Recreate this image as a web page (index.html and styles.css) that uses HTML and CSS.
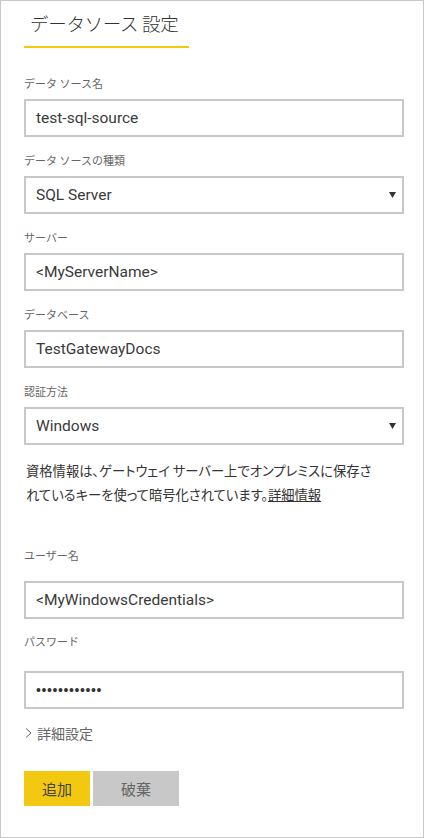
FILE: index.html
```html
<!DOCTYPE html>
<html lang="ja">
<head>
<meta charset="utf-8">
<link rel="stylesheet" href="styles.css">
</head>
<body>
<div class="panel">
  <div class="title">データソース 設定</div>

  <div class="field first">
    <div class="label">データ ソース名</div>
    <div class="input">test-sql-source</div>
  </div>

  <div class="field">
    <div class="label">データ ソースの種類</div>
    <div class="input select">
      <span>SQL Server</span>
      <svg class="caret" width="7" height="6" viewBox="0 0 7 6"><path d="M0 0H7L3.5 6Z" fill="#333"/></svg>
    </div>
  </div>

  <div class="field">
    <div class="label">サーバー</div>
    <div class="input">&lt;MyServerName&gt;</div>
  </div>

  <div class="field">
    <div class="label">データベース</div>
    <div class="input">TestGatewayDocs</div>
  </div>

  <div class="field">
    <div class="label">認証方法</div>
    <div class="input select">
      <span>Windows</span>
      <svg class="caret" width="7" height="6" viewBox="0 0 7 6"><path d="M0 0H7L3.5 6Z" fill="#333"/></svg>
    </div>
  </div>

  <p class="note">資格情報は、ゲートウェイ サーバー上でオンプレミスに保存されているキーを使って暗号化されています。<a class="link" href="#">詳細情報</a></p>

  <div class="field user">
    <div class="label">ユーザー名</div>
    <div class="input">&lt;MyWindowsCredentials&gt;</div>
  </div>

  <div class="field pass">
    <div class="label">パスワード</div>
    <div class="input dots">••••••••••••</div>
  </div>

  <div class="advanced">
    <svg class="chev" width="7" height="10" viewBox="0 0 7 10"><path d="M1 0.5L6 5L1 9.5" fill="none" stroke="#666" stroke-width="1"/></svg>
    <span>詳細設定</span>
  </div>

  <div class="actions">
    <button class="btn primary">追加</button>
    <button class="btn secondary">破棄</button>
  </div>
</div>
</body>
</html>
```

FILE: styles.css
```css
html, body {
  margin: 0;
  padding: 0;
  background: #fff;
}

body {
  width: 424px;
  height: 838px;
  font-family: Roboto, "Noto Sans CJK JP", sans-serif;
  color: #333;
}

.panel {
  box-sizing: border-box;
  width: 424px;
  height: 838px;
  border: 1px solid #c8c8c8;
  padding: 8px 19px 0 23px;
}

.title {
  display: inline-block;
  box-sizing: border-box;
  width: 165px;
  white-space: nowrap;
  padding: 0 0 9px 6px;
  font-family: "Noto Sans CJK JP", sans-serif;
  font-weight: 300;
  font-size: 18.5px;
  line-height: 28px;
  letter-spacing: -0.3px;
  color: #333;
  border-bottom: 2px solid #f2c811;
}

.field {
  display: flex;
  flex-direction: column;
}

.field.first .label {
  margin-top: 27px;
}

.label {
  font-family: "Noto Sans CJK JP", sans-serif;
  font-size: 11px;
  line-height: 16px;
  color: #666;
  margin: 15px 0 8px;
}

.input {
  box-sizing: border-box;
  height: 38px;
  border: 2px solid #c8c8c8;
  padding: 0 6px 0 10px;
  display: flex;
  align-items: center;
  font-size: 15.5px;
  color: #3a3a3a;
}

.select {
  justify-content: space-between;
}

.caret {
  display: block;
}

.note {
  margin: 14px 0 0;
  font-family: "Noto Sans CJK JP", sans-serif;
  font-feature-settings: "palt";
  font-size: 13.3px;
  line-height: 24px;
  color: #333;
  padding-left: 2px;
  width: 358px;
}

.link {
  color: #333;
  text-decoration: underline;
}

.field.user .label {
  margin: 40px 0 18px;
}

.field.pass .label {
  margin: 14px 0 22px;
}

.dots {
  font-family: "Liberation Sans", sans-serif;
  font-size: 14px;
  letter-spacing: 0.6px;
  color: #333;
}

.advanced {
  margin-top: 14px;
  display: flex;
  align-items: center;
  gap: 5px;
  padding-left: 1px;
  font-family: "Noto Sans CJK JP", sans-serif;
  font-size: 14px;
  line-height: 20px;
  color: #666;
}

.chev {
  display: block;
}

.actions {
  display: flex;
  gap: 3px;
  margin-top: 28px;
}

.btn {
  height: 35px;
  border: 0;
  margin: 0;
  padding: 0;
  font-family: "Noto Sans CJK JP", sans-serif;
  font-size: 15px;
}

.primary {
  width: 66px;
  background: #f2c811;
  color: #444;
}

.secondary {
  width: 86px;
  background: #c8c8c8;
  color: #666;
}
```
